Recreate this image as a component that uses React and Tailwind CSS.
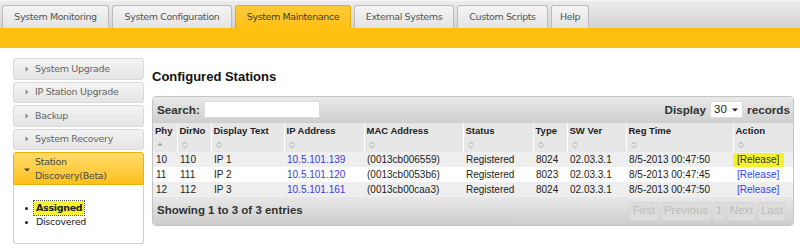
import React from "react";

const tabs = [
  { t: "System Monitoring", w: "w-[107px]" },
  { t: "System Configuration", w: "w-[120px]" },
  { t: "System Maintenance", w: "w-[116px]", active: true },
  { t: "External Systems", w: "w-[100px]" },
  { t: "Custom Scripts", w: "w-[91px]" },
  { t: "Help", w: "w-[38px]" },
];

const sideItems = ["System Upgrade", "IP Station Upgrade", "Backup", "System Recovery"];

const cols = [
  { h: "Phy", w: "w-[24px]" },
  { h: "DirNo", w: "w-[34px]" },
  { h: "Display Text", w: "w-[73px]" },
  { h: "IP Address", w: "w-[80px]" },
  { h: "MAC Address", w: "w-[99px]" },
  { h: "Status", w: "w-[70px]" },
  { h: "Type", w: "w-[34px]" },
  { h: "SW Ver", w: "w-[59px]" },
  { h: "Reg Time", w: "w-[107px]" },
  { h: "Action", w: "w-[60px]" },
];

const rows = [
  ["10", "110", "IP 1", "10.5.101.139", "(0013cb006559)", "Registered", "8024", "02.03.3.1", "8/5-2013 00:47:50"],
  ["11", "111", "IP 2", "10.5.101.120", "(0013cb0053b6)", "Registered", "8023", "02.03.3.1", "8/5-2013 00:47:45"],
  ["12", "112", "IP 3", "10.5.101.161", "(0013cb00caa3)", "Registered", "8024", "02.03.3.1", "8/5-2013 00:47:50"],
];

const verdana = { fontFamily: '"DejaVu Sans", Verdana, sans-serif' };

function SortBoth() {
  return (
    <svg width="6" height="8" viewBox="0 0 6 8" className="block">
      <path d="M1 3.2 L3 1.2 L5 3.2 M1 4.8 L3 6.8 L5 4.8" fill="none" stroke="#a8a8a8" strokeWidth="1" strokeLinejoin="round" strokeLinecap="round" />
    </svg>
  );
}

function SortAsc() {
  return (
    <svg width="6" height="8" viewBox="0 0 6 8" className="block">
      <path d="M0.5 4.5 L3 1.8 L5.5 4.5 Z" fill="#9a9a9a" />
    </svg>
  );
}

function TriRight() {
  return (
    <svg width="4" height="6" viewBox="0 0 4 6" className="block">
      <path d="M0.5 0.5 L3.5 3 L0.5 5.5 Z" fill="#8a8a8a" />
    </svg>
  );
}

function TriDown() {
  return (
    <svg width="6" height="4" viewBox="0 0 6 4" className="block">
      <path d="M0 0.5 L6 0.5 L3 3.5 Z" fill="#3a3a3a" />
    </svg>
  );
}

export default function App() {
  return (
    <div className="w-[800px] h-[250px] bg-white overflow-hidden" style={{ fontFamily: '"Liberation Sans", Arial, sans-serif' }}>
      {/* Top tab bar */}
      <div className="h-[28px] bg-gradient-to-b from-[#ececec] to-[#d3d3d3] border-t border-[#f6f6f6] flex items-end pl-[2px] gap-[3px]">
        {tabs.map((tab) => (
          <div
            key={tab.t}
            style={verdana}
            className={
              tab.active
                ? `${tab.w} h-[23px] rounded-t-[3px] border border-b-0 border-[#e3ad0a] bg-gradient-to-b from-[#fecb38] to-[#fec010] flex items-center justify-center text-[9.5px] tracking-[-0.4px] text-[#3c3c3c]`
                : `${tab.w} h-[23px] rounded-t-[3px] border border-b-0 border-[#bcbcbc] bg-gradient-to-b from-[#f4f4f4] to-[#e4e4e4] flex items-center justify-center text-[9.5px] tracking-[-0.4px] text-[#555]`
            }
          >
            {tab.t}
          </div>
        ))}
      </div>
      <div className="h-[20px] bg-[#fec010]" />

      <div className="flex pt-[10px]">
        {/* Sidebar */}
        <div className="ml-[13px] w-[131px] flex flex-col gap-[2px]" style={verdana}>
          {sideItems.map((s) => (
            <div
              key={s}
              className="h-[21.5px] rounded-[3px] border border-[#d9d9d9] bg-gradient-to-b from-[#f3f3f3] to-[#e5e5e5] flex items-center pl-[11px] gap-[6px] text-[9.5px] tracking-[-0.3px] text-[#666]"
            >
              <TriRight />
              <span>{s}</span>
            </div>
          ))}
          <div>
            <div className="h-[33px] rounded-t-[3px] border border-[#e6b20c] bg-gradient-to-b from-[#ffdb66] to-[#fec010] flex items-center pl-[10px] gap-[5px] text-[9.5px] tracking-[-0.3px] text-[#4a4a4a]">
              <div className="pt-[3px]">
                <TriDown />
              </div>
              <div className="leading-[14px]">
                Station
                <br />
                Discovery(Beta)
              </div>
            </div>
            <div className="h-[59px] border border-t-0 border-[#cfcfcf] rounded-b-[3px] pt-[16px] pl-[11px] text-[9.5px] tracking-[-0.3px] text-[#222] leading-[12px]">
              <div className="flex items-center">
                <span className="w-[3px] h-[3px] rounded-full bg-[#222] mr-[6px]" />
                <span className="font-bold bg-[#f6f42c] outline-1 outline-dotted outline-[#555] px-[2px] py-[1px]">Assigned</span>
              </div>
              <div className="flex items-center mt-[1px]">
                <span className="w-[3px] h-[3px] rounded-full bg-[#222] mr-[8px]" />
                <span>Discovered</span>
              </div>
            </div>
          </div>
        </div>

        {/* Main */}
        <div className="ml-[8px] pt-[11px]">
          <div className="text-[13px] leading-[16px] font-bold text-[#111] mb-[11px]">Configured Stations</div>

          <div className="w-[642px] border border-[#c4c4c4] rounded-[4px] overflow-hidden">
            {/* Toolbar */}
            <div className="h-[26px] bg-gradient-to-b from-[#e9e9e9] to-[#cfcfcf] flex items-center justify-between pl-[4px] pr-[3px]">
              <div className="flex items-center">
                <span className="text-[11.7px] font-bold text-[#333]">Search:</span>
                <div className="ml-[4px] w-[116px] h-[17px] bg-white border border-[#dcdcdc]" />
              </div>
              <div className="flex items-center text-[11.7px] font-bold text-[#333]">
                <span>Display</span>
                <div className="ml-[4px] w-[33px] h-[17px] bg-white border border-[#dcdcdc] flex items-center justify-between pl-[3px] pr-[4px] font-normal text-[11.5px] text-[#222]">
                  <span>30</span>
                  <svg width="6" height="4" viewBox="0 0 6 4"><path d="M0 0.5 L6 0.5 L3 3.5 Z" fill="#222" /></svg>
                </div>
                <span className="ml-[4px]">records</span>
              </div>
            </div>

            <table className="w-full table-fixed border-collapse">
              <colgroup>
                {cols.map((c) => (
                  <col key={c.h} className={c.w} />
                ))}
              </colgroup>
              <thead>
                <tr className="bg-[#e7e7e7]">
                  {cols.map((c, i) => (
                    <th
                      key={c.h}
                      className={`h-[15px] p-0 pl-[2px] text-left align-middle text-[9.5px] leading-none font-bold text-[#222] ${i > 0 ? "border-l border-white" : ""}`}
                    >
                      {c.h}
                    </th>
                  ))}
                </tr>
                <tr className="bg-[#e7e7e7]">
                  {cols.map((c, i) => (
                    <th
                      key={c.h}
                      className={`h-[14px] p-0 pl-[4px] align-middle ${i > 0 ? "border-l border-white" : ""}`}
                    >
                      {i === 0 ? <SortAsc /> : <SortBoth />}
                    </th>
                  ))}
                </tr>
              </thead>
              <tbody>
                {rows.map((r, ri) => (
                  <tr key={ri} className={ri === 1 ? "bg-white" : "bg-[#eeeeee]"}>
                    {r.map((v, ci) => (
                      <td
                        key={ci}
                        className={`h-[15px] p-0 pl-[3px] align-middle text-[10px] leading-none whitespace-nowrap ${ci === 3 ? "text-[#3b3bdc]" : "text-[#222]"}`}
                      >
                        {v}
                      </td>
                    ))}
                    <td className="h-[15px] p-0 align-middle text-[10px] leading-none whitespace-nowrap">
                      {ri === 0 ? (
                        <span className="inline-block bg-[#f4f22a] rounded-[2px] pl-[4px] pr-[5px] py-[2px] text-[#333]">[Release]</span>
                      ) : (
                        <span className="inline-block pl-[4px] text-[#3046f4]">[Release]</span>
                      )}
                    </td>
                  </tr>
                ))}
              </tbody>
            </table>

            {/* Footer */}
            <div className="h-[28px] bg-gradient-to-b from-[#e8e8e8] to-[#cdcdcd] flex items-center justify-between pl-[4px] pr-[7px]">
              <span className="text-[11.5px] font-bold text-[#333]">Showing 1 to 3 of 3 entries</span>
              <div className="flex items-center gap-[2px] text-[11.5px] text-[#bdbdbd]">
                {[
                  ["First", "w-[30px]"],
                  ["Previous", "w-[50px]"],
                  ["1", "w-[12px]"],
                  ["Next", "w-[29px]"],
                  ["Last", "w-[28px]"],
                ].map(([t, w]) => (
                  <div key={t} className={`${w} h-[19px] flex items-center justify-center rounded-[2px] bg-[#dcdcdc] border border-[#d6d6d6]`}>
                    {t}
                  </div>
                ))}
              </div>
            </div>
          </div>
        </div>
      </div>
    </div>
  );
}
